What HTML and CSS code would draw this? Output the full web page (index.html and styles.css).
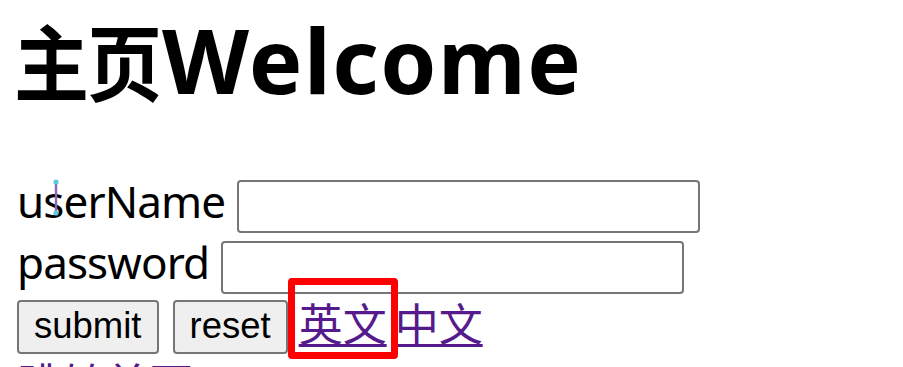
FILE: index.html
```html
<!DOCTYPE html>
<html lang="zh">
<head>
<meta charset="utf-8">
<title>主页</title>
<link rel="stylesheet" href="styles.css">
</head>
<body>
<div class="page">
  <h1 class="title"><span class="cjk">主页</span>Welcome</h1>
  <form class="login">
    <div class="row">
      <label class="label" for="user">userName</label>
      <input class="field" id="user" type="text">
      <svg class="cursor" width="8" height="37" viewBox="0 0 8 37" aria-hidden="true">
        <line x1="4" y1="3" x2="4" y2="34" stroke="#8a67b4" stroke-width="2.4"/>
        <circle cx="4" cy="3" r="2.6" fill="#5ec8dc"/>
        <circle cx="4" cy="34" r="2.6" fill="#5ec8dc"/>
      </svg>
    </div>
    <div class="row">
      <label class="label" for="pwd">password</label>
      <input class="field" id="pwd" type="password">
    </div>
    <div class="row actions">
      <button class="btn" type="submit">submit</button>
      <button class="btn" type="reset">reset</button>
      <a class="lang current" href="#">英文</a>
      <a class="lang" href="#">中文</a>
    </div>
    <div class="row jump">
      <a class="lang" href="#">跳转首页</a>
    </div>
  </form>
</div>
</body>
</html>
```

FILE: styles.css
```css
html, body {
  margin: 0;
  padding: 0;
  background: #ffffff;
}

body {
  font-family: "Noto Sans", "Noto Sans CJK SC", sans-serif;
  color: #000000;
  overflow: hidden;
}

.page {
  padding-left: 17px;
}

.title {
  margin: 15px 0 74px;
  font-family: "Noto Sans", "Noto Sans CJK SC", sans-serif;
  font-size: 90px;
  line-height: 88px;
  font-weight: 700;
  letter-spacing: 1.5px;
}

.title .cjk {
  display: inline-block;
  font-family: "Noto Sans CJK SC", sans-serif;
  font-size: 75px;
  font-weight: 700;
  letter-spacing: -2px;
  transform: scaleY(1.1);
  transform-origin: 50% 80%;
  margin-left: -3px;
  margin-right: 2px;
}

.login {
  margin: 0;
  position: relative;
}

.row {
  display: flex;
  align-items: flex-start;
}

.row + .row {
  margin-top: 8px;
}

.label {
  font-family: "Noto Sans", "Noto Sans CJK SC", sans-serif;
  font-size: 44px;
  line-height: 42px;
  letter-spacing: -0.9px;
}

.field {
  box-sizing: border-box;
  width: 463px;
  height: 53px;
  border: 2px solid #767676;
  border-radius: 4px;
  background: #ffffff;
  margin: 0 0 0 12px;
  padding: 0 6px;
  font-size: 36px;
}

.cursor {
  position: absolute;
  left: 35px;
  top: -1px;
}

.row.actions {
  margin-top: 6px;
  align-items: flex-start;
}

.btn {
  box-sizing: border-box;
  height: 54px;
  padding: 0 15px 2px;
  margin: 0 14px 0 0;
  border: 2px solid #767676;
  border-radius: 4px;
  background: #efefef;
  color: #000000;
  font-family: "Liberation Sans", Arial, sans-serif;
  font-size: 36.5px;
}

.lang {
  font-family: "Noto Sans CJK SC", sans-serif;
  font-size: 44px;
  line-height: 44px;
  color: #551a8b;
  text-decoration: underline;
  text-decoration-thickness: 3px;
  text-underline-offset: 3px;
}

.current {
  position: relative;
  margin-left: -3px;
}

.lang + .lang {
  margin-left: 8px;
}

.current::after {
  content: "";
  position: absolute;
  left: -11px;
  right: -11px;
  top: -22px;
  bottom: -15px;
  border: 7px solid #ff0000;
  border-radius: 4px;
  pointer-events: none;
}

.row.jump {
  margin-top: 6px;
}
```
